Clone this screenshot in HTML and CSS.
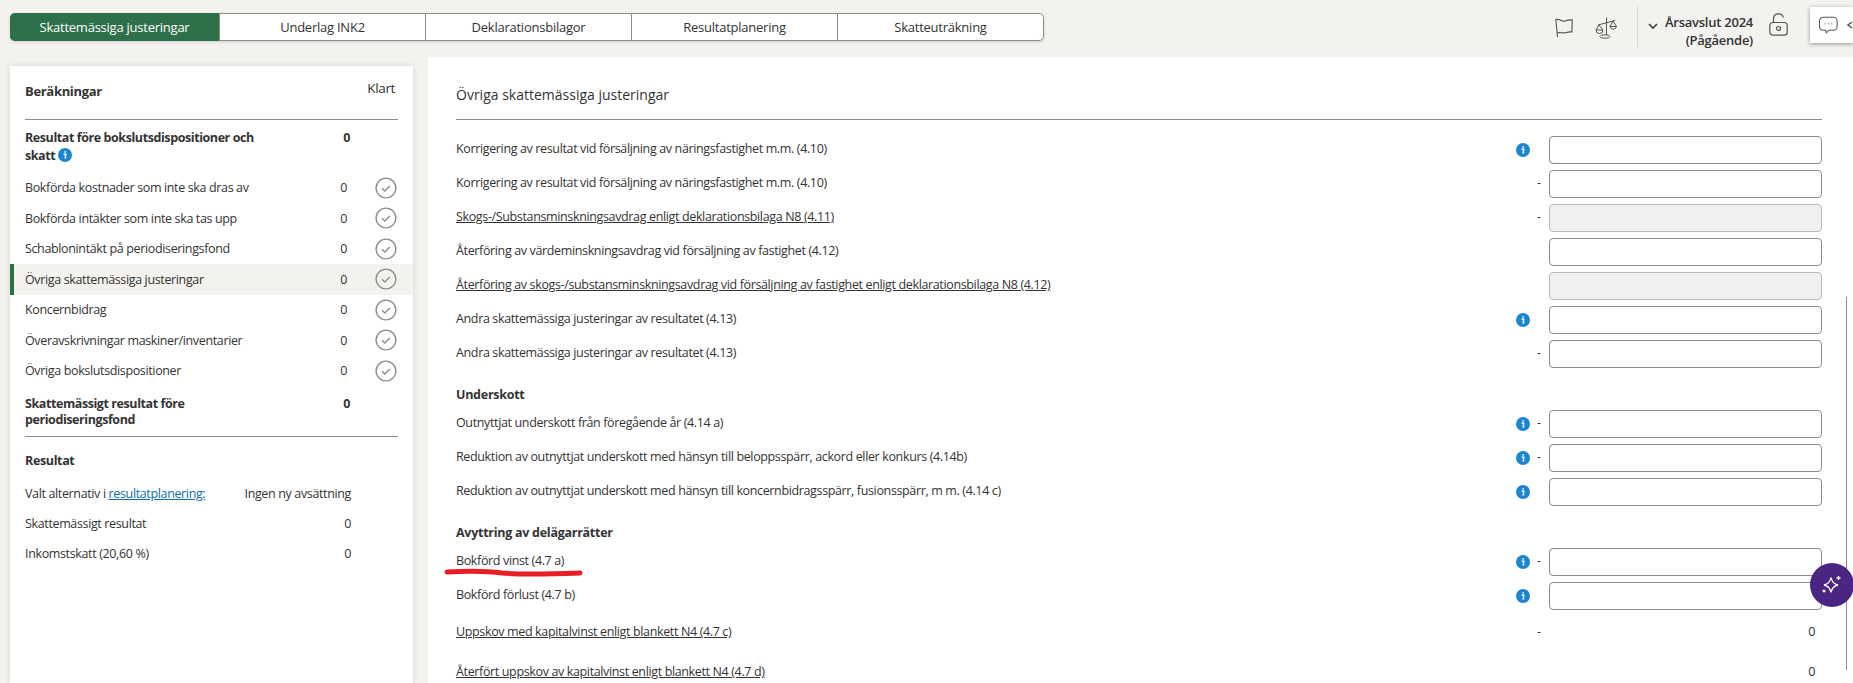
FILE: index.html
```html
<!DOCTYPE html>
<html lang="sv">
<head>
    <meta charset="UTF-8">
    <meta name="viewport" content="width=device-width, initial-scale=1.0">
    <title>Skattemässiga justeringar</title>
    <link rel="stylesheet" href="styles.css">
</head>
<body>
    <svg class="defs" width="0" height="0">
        <symbol id="info" viewBox="0 0 14 14">
            <circle cx="7" cy="7" r="7" fill="#1a86d2"/>
            <rect x="6.2" y="3" width="1.8" height="1.8" rx=".9" fill="#fff"/>
            <path d="M5.6 6.2h2.2l-.6 3.600h1.100" fill="none" stroke="#fff" stroke-width="1.4"/>
        </symbol>
        <symbol id="check" viewBox="0 0 22 22">
            <circle cx="11" cy="11" r="9.9" fill="none" stroke="#8c8c8c" stroke-width="1.4"/>
            <path d="M7 11.300l2.800 2.700 5-5" fill="none" stroke="#8c8c8c" stroke-width="1.300"/>
        </symbol>
    </svg>

    <header class="topbar">
        <nav class="tabs">
            <a class="tab tab-active">Skattemässiga justeringar</a>
            <a class="tab">Underlag INK2</a>
            <a class="tab">Deklarationsbilagor</a>
            <a class="tab">Resultatplanering</a>
            <a class="tab">Skatteuträkning</a>
        </nav>
        <div class="tools">
            <svg class="tool-flag" width="18" height="20" viewBox="0 0 18 20" fill="none" stroke="#555" stroke-width="1.100">
                <path d="M.8 1l1.700 18M.8 1.500c2.500-.6 4 .2 6.200 1.300 1.200.6 3 .3 3.600 0 1.500-.7 4-1 6.600-.9l-.3 12c-2.200-.2-4.500.2-6.500.8-2.500.6-4.500-.5-8.200 0"/>
            </svg>
            <svg class="tool-scale" width="22" height="22" viewBox="0 0 22 22" fill="none" stroke="#555" stroke-width="1">
                <path d="M11.500 .5v17.500M3 8l17-4.500M4 8L1 13h7zM18 4l-3 5.500h6.500z"/>
                <path d="M1 13a3.500 3.500 0 0 0 7 0M15 9.500a3.300 3.300 0 0 0 6.500 0"/>
                <ellipse cx="10" cy="19.500" rx="5" ry="1.700"/>
            </svg>
            <div class="year">
                <svg class="year-chevron" width="10" height="7" viewBox="0 0 10 7" fill="none" stroke="#444" stroke-width="1.700"><path d="M1 1l4 4 4-4"/></svg>
                <div class="year-text">Årsavslut 2024<br>(Pågående)</div>
            </div>
            <svg class="tool-lock" width="19" height="23" viewBox="0 0 19 23" fill="none" stroke="#555" stroke-width="1.200">
                <rect x=".8" y="9.500" width="17.400" height="12.700" rx="3"/>
                <path d="M4.500 9.500V6a5 5 0 0 1 9.800-1.500"/>
                <circle cx="9.500" cy="15.500" r="2"/>
            </svg>
            <div class="chat">
                <svg width="22" height="20" viewBox="0 0 22 20" fill="none" stroke="#555" stroke-width="1.200">
                    <path d="M5.500 1h11a4.500 4.500 0 0 1 4.500 4.500v6a4.500 4.500 0 0 1-4.500 4.500h-5l-3 3-1-3h-2.500a4.500 4.500 0 0 1-4.500-4.500v-6a4.500 4.500 0 0 1 4.500-4.500z"/>
                    <path d="M6.500 8.500h.8M10.500 8.500h.8M14.500 8.500h.8" stroke-width="1.600"/>
                </svg>
                <svg class="chat-arrow" width="6" height="8" viewBox="0 0 6 8" fill="none" stroke="#555" stroke-width="1.500"><path d="M5 1L1 4l4 3"/></svg>
            </div>
        </div>
    </header>

    <div class="content">
        <aside class="side">
            <div class="side-head">
                <h2 class="side-title">Beräkningar</h2>
                <span class="side-done">Klart</span>
            </div>

            <div class="sum-row sum-first">
                <div class="sum-label">Resultat före bokslutsdispositioner och skatt <svg class="info" width="14" height="14"><use href="#info"/></svg></div>
                <div class="sum-value">0</div>
            </div>

            <div class="calc-row"><span>Bokförda kostnader som inte ska dras av</span><span class="calc-value">0</span><svg class="check" width="22" height="22"><use href="#check"/></svg></div>
            <div class="calc-row"><span>Bokförda intäkter som inte ska tas upp</span><span class="calc-value">0</span><svg class="check" width="22" height="22"><use href="#check"/></svg></div>
            <div class="calc-row"><span>Schablonintäkt på periodiseringsfond</span><span class="calc-value">0</span><svg class="check" width="22" height="22"><use href="#check"/></svg></div>
            <div class="calc-row calc-active"><span>Övriga skattemässiga justeringar</span><span class="calc-value">0</span><svg class="check" width="22" height="22"><use href="#check"/></svg></div>
            <div class="calc-row"><span>Koncernbidrag</span><span class="calc-value">0</span><svg class="check" width="22" height="22"><use href="#check"/></svg></div>
            <div class="calc-row"><span>Överavskrivningar maskiner/inventarier</span><span class="calc-value">0</span><svg class="check" width="22" height="22"><use href="#check"/></svg></div>
            <div class="calc-row"><span>Övriga bokslutsdispositioner</span><span class="calc-value">0</span><svg class="check" width="22" height="22"><use href="#check"/></svg></div>

            <div class="sum-row sum-last">
                <div class="sum-label">Skattemässigt resultat före periodiseringsfond</div>
                <div class="sum-value">0</div>
            </div>

            <h3 class="result-title">Resultat</h3>
            <div class="result-row"><span>Valt alternativ i <a class="link">resultatplanering:</a></span><span>Ingen ny avsättning</span></div>
            <div class="result-row"><span>Skattemässigt resultat</span><span>0</span></div>
            <div class="result-row"><span>Inkomstskatt (20,60 %)</span><span>0</span></div>
        </aside>

        <main class="main">
            <h1 class="main-title">Övriga skattemässiga justeringar</h1>

            <div class="row"><span class="label">Korrigering av resultat vid försäljning av näringsfastighet m.m. (4.10)</span><svg class="info" width="14" height="14"><use href="#info"/></svg><span class="dash"></span><input class="field" type="text"></div>
            <div class="row"><span class="label">Korrigering av resultat vid försäljning av näringsfastighet m.m. (4.10)</span><span></span><span class="dash">-</span><input class="field" type="text"></div>
            <div class="row"><a class="label label-link">Skogs-/Substansminskningsavdrag enligt deklarationsbilaga N8 (4.11)</a><span></span><span class="dash">-</span><input class="field field-off" type="text" disabled></div>
            <div class="row"><span class="label">Återföring av värdeminskningsavdrag vid försäljning av fastighet (4.12)</span><span></span><span class="dash"></span><input class="field" type="text"></div>
            <div class="row"><a class="label label-link">Återföring av skogs-/substansminskningsavdrag vid försäljning av fastighet enligt deklarationsbilaga N8 (4.12)</a><span></span><span class="dash"></span><input class="field field-off" type="text" disabled></div>
            <div class="row"><span class="label">Andra skattemässiga justeringar av resultatet (4.13)</span><svg class="info" width="14" height="14"><use href="#info"/></svg><span class="dash"></span><input class="field" type="text"></div>
            <div class="row"><span class="label">Andra skattemässiga justeringar av resultatet (4.13)</span><span></span><span class="dash">-</span><input class="field" type="text"></div>

            <h2 class="group">Underskott</h2>
            <div class="row"><span class="label">Outnyttjat underskott från föregående år (4.14 a)</span><svg class="info" width="14" height="14"><use href="#info"/></svg><span class="dash">-</span><input class="field" type="text"></div>
            <div class="row"><span class="label">Reduktion av outnyttjat underskott med hänsyn till beloppsspärr, ackord eller konkurs (4.14b)</span><svg class="info" width="14" height="14"><use href="#info"/></svg><span class="dash">-</span><input class="field" type="text"></div>
            <div class="row"><span class="label">Reduktion av outnyttjat underskott med hänsyn till koncernbidragsspärr, fusionsspärr, m m. (4.14 c)</span><svg class="info" width="14" height="14"><use href="#info"/></svg><span class="dash"></span><input class="field" type="text"></div>

            <h2 class="group">Avyttring av delägarrätter</h2>
            <div class="row"><span class="label">Bokförd vinst (4.7 a)</span><svg class="info" width="14" height="14"><use href="#info"/></svg><span class="dash">-</span><input class="field" type="text"></div>
            <div class="row"><span class="label">Bokförd förlust (4.7 b)</span><svg class="info" width="14" height="14"><use href="#info"/></svg><span class="dash"></span><input class="field" type="text"></div>
            <div class="row row-tall"><a class="label label-link">Uppskov med kapitalvinst enligt blankett N4 (4.7 c)</a><span></span><span class="dash">-</span><span class="amount">0</span></div>
            <div class="row row-tall"><a class="label label-link">Återfört uppskov av kapitalvinst enligt blankett N4 (4.7 d)</a><span></span><span class="dash"></span><span class="amount">0</span></div>

            <svg class="scribble" width="140" height="12" viewBox="0 0 140 12" fill="none" stroke="#e81e25" stroke-width="5" stroke-linecap="round">
                <path d="M3 4c20-1 40-1 55 1 20 2 50 1 78 0"/>
            </svg>
            <div class="scrollbar"></div>
        </main>
    </div>

    <button class="ai-btn" type="button">
        <svg width="22" height="22" viewBox="0 0 22 22" fill="none" stroke="#fff" stroke-width="1.300">
            <path d="M10 3.500c.8 4.500 2.500 6.500 7 7.500-4.500 1-6.200 3-7 7.500-.8-4.500-2.500-6.500-7-7.500 4.500-1 6.200-3 7-7.500z"/>
            <path d="M17.500 2v4M15.500 4h4M3 15.500v3M1.500 17h3"/>
        </svg>
    </button>
</body>
</html>
```

FILE: styles.css
```css
* {
    box-sizing: border-box;
}
body {
    margin: 0;
    height: 100vh;
    overflow: hidden;
    background-color: #f3f2ee;
    color: #333;
    font-family: "Open Sans", Arial, sans-serif;
    font-size: 12.5px;
    letter-spacing: -0.36px;
}
.defs {
    position: absolute;
}

/* top bar */
.topbar {
    display: flex;
    justify-content: space-between;
    height: 57px;
    padding: 13px 0 0 10px;
}
.tabs {
    display: flex;
    height: 28px;
    width: 1034px;
    background: white;
    border: 1px solid #8c8c8c;
    border-radius: 5px;
    box-shadow: 0 1px 3px rgba(0, 0, 0, 0.15);
}
.tab {
    flex: 1;
    display: flex;
    align-items: center;
    justify-content: center;
    border-left: 1px solid #8c8c8c;
    font-size: 13px;
    letter-spacing: -0.24px;
}
.tab:first-child {
    border-left: none;
}
.tab-active {
    flex: none;
    width: 209px;
    margin: -1px 0 -1px -1px;
    background-color: #2e7049;
    color: white;
    border-radius: 5px 0 0 5px;
}
.tools {
    display: flex;
    align-items: flex-start;
    margin-top: -13px;
}
.tool-flag {
    margin: 18px 0 0 0;
}
.tool-scale {
    margin: 17px 0 0 22px;
}
.year {
    display: flex;
    height: 41px;
    margin: 6px 0 0 20px;
    padding-left: 10px;
    border-left: 1px solid #d9d8d3;
}
.year-chevron {
    margin: 17px 0 0 0;
}
.year-text {
    margin: 7px 0 0 7px;
    text-align: right;
    line-height: 18px;
    font-size: 13px;
    font-weight: 600;
    letter-spacing: -0.25px;
    color: #333;
}
.tool-lock {
    margin: 13px 0 0 16px;
}
.chat {
    display: flex;
    align-items: center;
    gap: 9px;
    height: 36px;
    width: 43px;
    margin: 7px 0 0 22px;
    padding-left: 9px;
    background: white;
    box-shadow: 0 1px 4px rgba(0, 0, 0, 0.4);
}
.chat-arrow {
    flex: none;
}

/* content */
.content {
    display: flex;
    gap: 15px;
    padding-left: 10px;
    height: 626px;
}

/* left card */
.side {
    flex: none;
    width: 403px;
    margin-top: 9px;
    background: white;
    box-shadow: 0 0 6px rgba(0, 0, 0, 0.12);
}
.side-head {
    display: flex;
    justify-content: space-between;
    height: 54px;
    margin: 0 15px;
    padding: 13px 3px 0 0;
    border-bottom: 1px solid #8c8c8c;
}
.side-title {
    margin: 3px 0 0 0;
    font-size: 13px;
    font-weight: 700;
    letter-spacing: -0.32px;
}
.side-done {
    font-size: 13.500px;
}
.sum-row {
    display: flex;
    justify-content: space-between;
    padding: 0 63px 0 15px;
    font-weight: 700;
    letter-spacing: -0.42px;
}
.sum-first {
    margin-top: 9px;
    line-height: 18px;
}
.sum-last {
    margin: 10px 15px 0 15px;
    height: 41px;
    padding-right: 48px;
    padding-left: 0;
    line-height: 16px;
    border-bottom: 1px solid #8c8c8c;
}
.sum-label {
    width: 240px;
}
.info {
    vertical-align: -2px;
}
.calc-row {
    display: grid;
    grid-template-columns: 1fr 24px 51px;
    align-items: center;
    height: 30.500px;
    padding: 0 15px;
}
.sum-first + .calc-row {
    margin-top: 7.500px;
}
.calc-value {
    text-align: right;
}
.check {
    justify-self: end;
    margin-right: 1px;
}
.calc-active {
    background-color: #f3f2ee;
    border-left: 4px solid #2e7049;
    padding-left: 11px;
}
.result-title {
    margin: 15px 0 0 15px;
    font-size: 12.500px;
    font-weight: 700;
}
.result-row {
    display: flex;
    justify-content: space-between;
    height: 30px;
    align-items: center;
    padding: 0 62px 0 15px;
}
.result-title + .result-row {
    margin-top: 9px;
}
.link {
    color: #0f6cb0;
    text-decoration: underline;
}

/* main panel */
.main {
    position: relative;
    flex: 1;
    padding: 0 31px 0 28px;
    background: white;
}
.main-title {
    height: 63px;
    margin: 0;
    padding-top: 28px;
    border-bottom: 1px solid #8c8c8c;
    font-size: 14px;
    font-weight: 400;
    letter-spacing: 0;
}
.main-title + .row {
    margin-top: 13px;
}
.row {
    display: grid;
    grid-template-columns: 1fr 20px 16px 273px;
    align-items: center;
    height: 34px;
}
.row .info {
    justify-self: center;
}
.row-tall {
    height: 40px;
}
.label {
    padding-bottom: 2.500px;
}
.label-link {
    text-decoration: underline;
}
.dash {
    padding-left: 4px;
    padding-bottom: 3px;
}
.field {
    width: 273px;
    height: 28px;
    background: white;
    border: 1px solid #8c8c8c;
    border-radius: 4px;
}
.field-off {
    background-color: #f0f0f0;
    border-color: #bbb;
}
.amount {
    padding-right: 7px;
    padding-bottom: 3px;
    text-align: right;
}
.group {
    height: 24px;
    margin: 12px 0 0 0;
    line-height: 24px;
    font-size: 12.500px;
    font-weight: 700;
    letter-spacing: -0.27px;
}
.scribble {
    position: absolute;
    left: 16px;
    top: 511px;
}
.scrollbar {
    position: absolute;
    top: 240px;
    right: 6px;
    width: 1px;
    height: 373px;
    background-color: #8c8c8c;
}
.ai-btn {
    position: absolute;
    left: 1810px;
    top: 563px;
    width: 44px;
    height: 44px;
    padding: 0;
    display: flex;
    align-items: center;
    justify-content: center;
    background-color: #4a2682;
    border: none;
    border-radius: 50%;
}
```
